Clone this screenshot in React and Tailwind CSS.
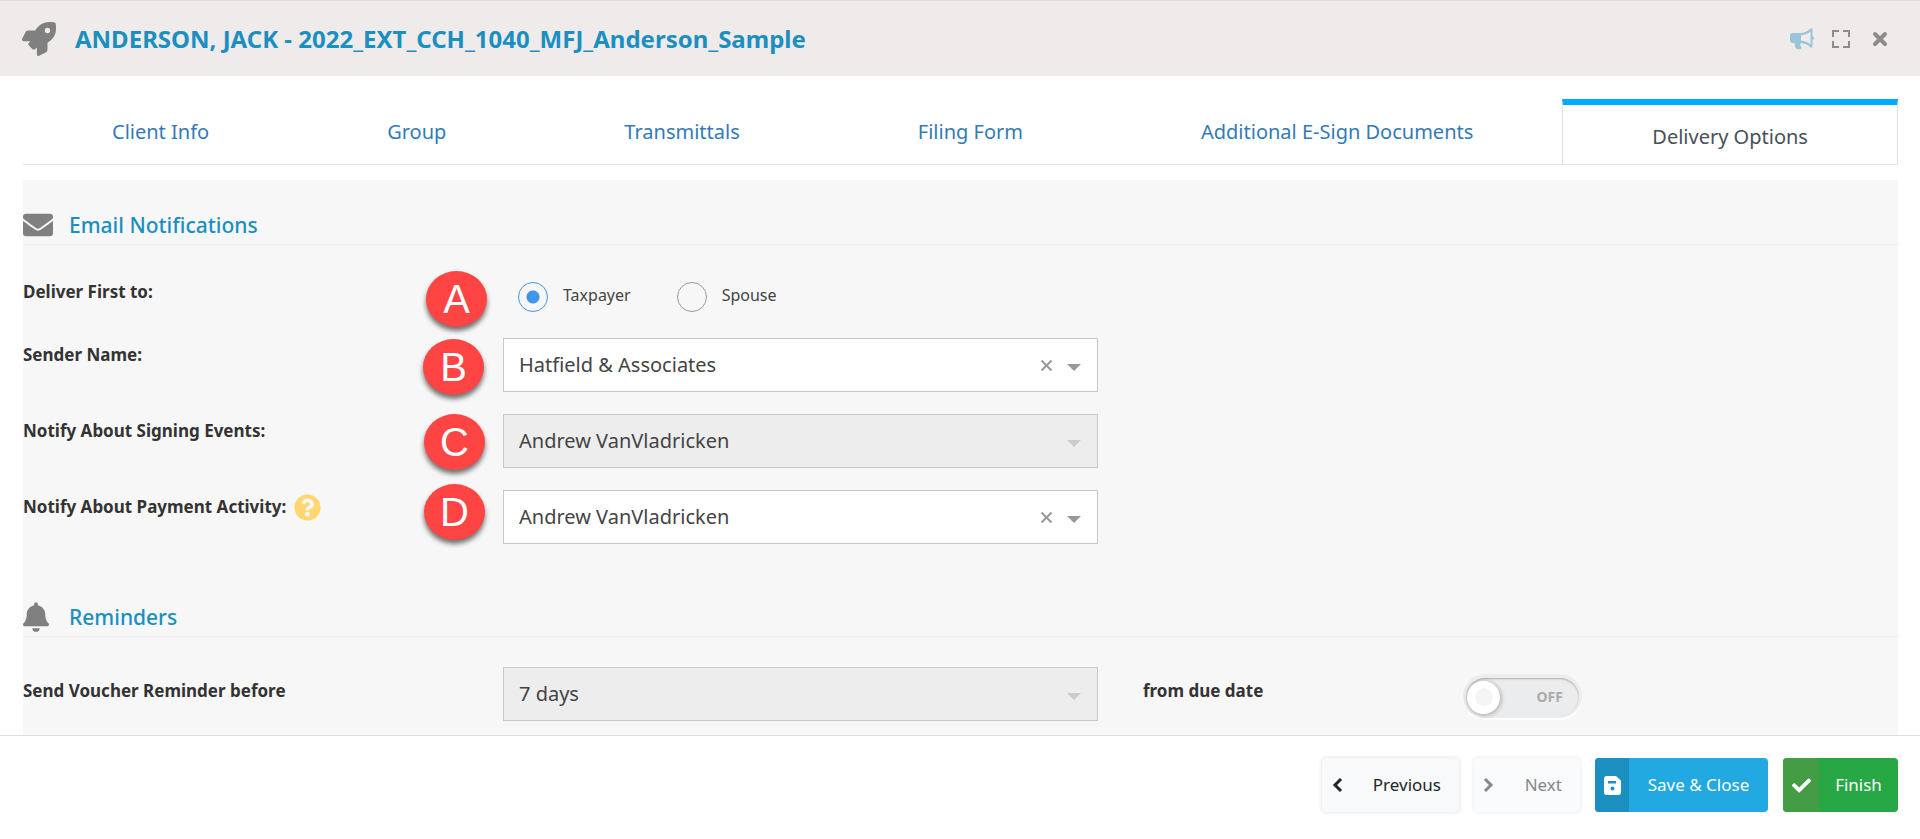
import React, { useState } from 'react';
import { FaRocket, FaEnvelope, FaBell, FaQuestionCircle, FaCheck } from 'react-icons/fa';

const tabs = [
  'Client Info',
  'Group',
  'Transmittals',
  'Filing Form',
  'Additional E-Sign Documents',
  'Delivery Options'
];

// Callout letters that float over the form
const callouts = [
  { letter: 'A', position: 'left-[403px] top-[91px]' },
  { letter: 'B', position: 'left-[400px] top-[159px]' },
  { letter: 'C', position: 'left-[401px] top-[234px]' },
  { letter: 'D', position: 'left-[401px] top-[304px]' }
];

const BullhornIcon = () => (
  <svg width="24" height="22" viewBox="0 0 24 22" fill="#9cc4d8">
    <path
      fillRule="evenodd"
      d="M2.5 5H10C14 5 18 3 20 1C21 0 22.500 0 22.500 1.500V8.300C23.500 8.500 24 9.300 24 10C24 10.700 23.500 11.500 22.500 11.800V18.500C22.500 20 21 20 20 19C18 17 14.500 15.300 10.500 15C10 16.500 10.300 18 11.500 20C11.500 21 9.500 21.500 7.500 21.300C5.500 21 4.500 17.500 4.700 15H2.500C1 15 0 14 0 12.500V7.500C0 6 1 5 2.500 5ZM11 7.200V12.800C14.500 13 18 14.400 20.500 16.300V3.800C18 5.800 14.500 7 11 7.200Z"
    />
  </svg>
);

const ExpandIcon = () => (
  <svg width="20" height="20" viewBox="0 0 20 20" fill="none" stroke="#8c8c8c" strokeWidth="2">
    <path d="M2 8V2H8M12 2H18V8M18 12V18H12M8 18H2V12" />
  </svg>
);

const CloseIcon = () => (
  <svg width="16" height="16" viewBox="0 0 16 16" fill="none" stroke="#8c8c8c" strokeWidth="4" strokeLinecap="round">
    <path d="M3 3L13 13M13 3L3 13" />
  </svg>
);

const SaveIcon = () => (
  <svg width="17" height="19" viewBox="0 0 17 19">
    <path fill="#fff" fillRule="evenodd" d="M2.500 0H12L17 4.500V16.500C17 18 16 19 14.500 19H2.500C1 19 0 18 0 16.500V2.500C0 1 1 0 2.500 0ZM4 5V7.500H12V5ZM8.500 10.500A2 2 0 1 0 8.500 14.500A2 2 0 1 0 8.500 10.500Z" />
  </svg>
);

const Chevron = ({ d }) => (
  <svg width="12" height="16" viewBox="0 0 12 16" fill="none" stroke="currentColor" strokeWidth="3">
    <path d={d} />
  </svg>
);

const SectionTitle = ({ icon, children }) => (
  <div className="flex h-10 items-center border-b border-[#ececec]">
    {icon}
    <h2 className="ml-4 pt-0.5 text-[21px] font-medium text-[#1b8fc0]">{children}</h2>
  </div>
);

const SelectBox = ({ id, value, disabled, clearable }) => (
  <div className="relative">
    <select
      id={id}
      disabled={disabled}
      className="h-[54px] w-full appearance-none border border-[#c8c8c8] bg-white px-[15px] text-xl text-[#444] opacity-100 disabled:bg-[#ededed]"
    >
      <option>{value}</option>
    </select>
    {clearable && (
      <button type="button" aria-label="Clear" className="absolute top-[22px] right-[46px]">
        <svg width="11" height="11" viewBox="0 0 11 11" stroke="#999" strokeWidth="2">
          <path d="M.5 .5L10.500 10.500M10.500 .5L.5 10.500" />
        </svg>
      </button>
    )}
    <svg
      className={`pointer-events-none absolute top-[26px] right-[17px] ${disabled ? 'text-[#ccc]' : 'text-[#999]'}`}
      width="14"
      height="7"
      viewBox="0 0 14 7"
      fill="currentColor"
    >
      <path d="M0 0H14L7 7Z" />
    </svg>
  </div>
);

const FieldRow = ({ id, label, help, children }) => (
  <div className="grid grid-cols-[480fr_595fr_800fr]">
    <div className="flex h-[34px] items-center gap-2">
      <label htmlFor={id} className="text-[17px] font-bold text-[#333]">{label}</label>
      {help && <FaQuestionCircle className="size-[27px] text-[#ffd76e]" />}
    </div>
    {children}
  </div>
);

const RadioOption = ({ label, checked, onChange }) => (
  <label className="flex items-center gap-[15px] text-base text-[#444]">
    <input
      type="radio"
      name="deliver"
      checked={checked}
      onChange={onChange}
      className="size-[30px] appearance-none rounded-full border border-[#999] checked:border-[#3f97ea] checked:bg-[radial-gradient(circle,#3f97ea_6px,transparent_7px)]"
    />
    <span className="pb-1">{label}</span>
  </label>
);

export default function App() {
  const [deliverTo, setDeliverTo] = useState('Taxpayer');
  const [reminder, setReminder] = useState(false);

  return (
    <div className="flex h-screen flex-col bg-white font-['Segoe_UI','Noto_Sans',sans-serif]">
      {/* Header */}
      <header className="flex h-[76px] shrink-0 items-center border-t border-[#dfdfdf] bg-[#efebea] px-[22px]">
        <FaRocket className="size-[34px] text-[#808080]" />
        <h1 className="ml-[19px] flex-1 text-2xl font-bold text-[#1b8fc0]">
          ANDERSON, JACK - 2022_EXT_CCH_1040_MFJ_Anderson_Sample
        </h1>
        <div className="flex items-center gap-[17px] pr-2.5">
          <button type="button" aria-label="Announcements"><BullhornIcon /></button>
          <button type="button" aria-label="Full screen"><ExpandIcon /></button>
          <button type="button" aria-label="Close" className="ml-1"><CloseIcon /></button>
        </div>
      </header>

      <main className="min-h-0 flex-1 overflow-hidden pt-[23px] pr-[22px] pl-[23px]">
        {/* Tabs */}
        <nav className="flex h-[66px] border-b border-[#dee2e6]">
          {tabs.map((tab) => (
            <a
              key={tab}
              href="#"
              className={
                tab === 'Delivery Options'
                  ? 'flex flex-auto items-center justify-center border-x border-t-[6px] border-[#dee2e6] border-t-[#00aaff] bg-white pt-1 text-xl text-[#495057]'
                  : 'flex flex-auto items-center justify-center text-xl text-[#337ab7]'
              }
            >
              {tab}
            </a>
          ))}
        </nav>

        {/* Delivery options form */}
        <form className="relative mt-[15px] h-full bg-[#f7f7f7] pt-[25px]">
          <SectionTitle icon={<FaEnvelope className="size-[30px] text-[#808080]" />}>
            Email Notifications
          </SectionTitle>

          <div className="pt-[30px]">
            <FieldRow label="Deliver First to:">
              <div className="flex h-[43px] items-center gap-[46px] pl-[15px]">
                {['Taxpayer', 'Spouse'].map((name) => (
                  <RadioOption
                    key={name}
                    label={name}
                    checked={deliverTo === name}
                    onChange={() => setDeliverTo(name)}
                  />
                ))}
              </div>
            </FieldRow>
          </div>
          <div className="mt-5 flex flex-col gap-[22px]">
            <FieldRow id="sender" label="Sender Name:">
              <SelectBox id="sender" value="Hatfield &amp; Associates" clearable />
            </FieldRow>
            <FieldRow id="signing" label="Notify About Signing Events:">
              <SelectBox id="signing" value="Andrew VanVladricken" disabled />
            </FieldRow>
            <FieldRow id="payment" label="Notify About Payment Activity:" help>
              <SelectBox id="payment" value="Andrew VanVladricken" clearable />
            </FieldRow>
          </div>

          <div className="mt-[53px]">
            <SectionTitle icon={<FaBell className="mr-1 h-[30px] w-[26px] text-[#808080]" />}>
              Reminders
            </SectionTitle>
          </div>
          <div className="mt-[30px] grid grid-cols-[480fr_595fr_45fr_323fr_432fr]">
            <label htmlFor="voucher" className="pt-[11px] text-[17px] font-bold text-[#333]">
              Send Voucher Reminder before
            </label>
            <SelectBox id="voucher" value="7 days" disabled />
            <span className="col-start-4 pt-[11px] text-[17px] font-bold text-[#333]">from due date</span>
            <div className="pt-[11px]">
              <button
                type="button"
                role="switch"
                aria-label="Voucher reminder"
                aria-checked={reminder}
                onClick={() => setReminder(!reminder)}
                className="flex h-[38px] w-[113px] items-center justify-between rounded-full bg-[#ebecee] pr-4 pl-px text-sm font-bold text-[#aaa] shadow-[inset_0_1px_2px_#aaa,0_-1px_0_3px_#ededed,0_1px_0_3px_#fff]"
              >
                <span className="flex size-[33px] items-center justify-center rounded-full bg-white shadow-[1px_1px_5px_rgba(0,0,0,0.3)]">
                  <span className="size-[18px] rounded-full bg-[#f5f5f5]" />
                </span>
                {reminder ? 'ON' : 'OFF'}
              </button>
            </div>
          </div>

          {callouts.map(({ letter, position }) => (
            <span
              key={letter}
              className={`absolute ${position} flex h-14 w-[61px] items-center justify-center rounded-[50%] bg-[#ff4444] font-['Liberation_Sans',sans-serif] text-[40px] leading-none text-white shadow-[0_4px_5px_rgba(0,0,0,0.55)]`}
            >
              {letter}
            </span>
          ))}
        </form>
      </main>

      {/* Footer */}
      <footer className="flex h-[104px] shrink-0 items-start justify-end gap-[15px] border-t border-[#dfdfdf] bg-white px-[22px] pt-[22px] text-[17px]">
        <button type="button" className="flex h-[54px] w-[137px] items-center justify-between rounded-sm bg-[#f8f9fa] pr-[18px] pl-2.5 text-[#212529] shadow-[0_0_4px_rgba(0,0,0,0.15)]">
          <Chevron d="M9 2L3 8L9 14" />
          Previous
        </button>
        <button type="button" disabled className="flex h-[54px] w-[106px] items-center justify-between rounded-sm bg-[#fafbfc] pr-[18px] pl-2 text-[#85888b] shadow-[0_0_4px_rgba(0,0,0,0.1)]">
          <Chevron d="M3 2L9 8L3 14" />
          Next
        </button>
        <button type="button" className="flex h-[54px] w-[173px] items-center overflow-hidden rounded-sm bg-[#22a9e1] text-white">
          <span className="flex h-full w-[34px] items-center justify-center bg-[#1b8fc0]"><SaveIcon /></span>
          <span className="flex-1">Save &amp; Close</span>
        </button>
        <button type="button" className="flex h-[54px] w-[115px] items-center overflow-hidden rounded-sm bg-[#28a745] text-white">
          <span className="flex h-full w-[36px] items-center justify-center bg-[#449d44]"><FaCheck className="size-[19px]" /></span>
          <span className="flex-1">Finish</span>
        </button>
      </footer>
    </div>
  );
}
